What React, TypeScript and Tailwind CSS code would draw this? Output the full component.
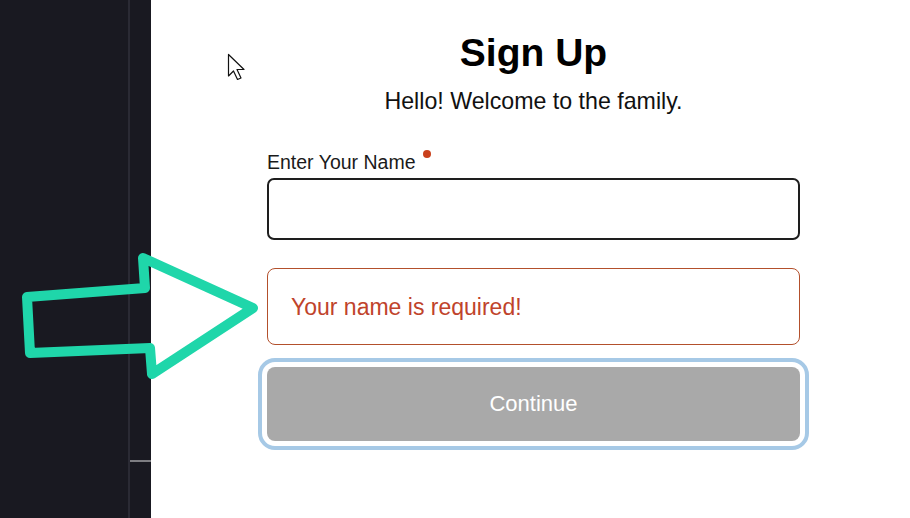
import React from "react";

export default function App() {
  return (
    <div className="relative flex h-[518px] w-[910px] overflow-hidden bg-white" style={{ fontFamily: '"Liberation Sans", Arial, sans-serif' }}>
      {/* left dark panel */}
      <div className="flex h-full w-[151px] shrink-0 bg-[#191921]">
        <div className="h-full w-[128px]" />
        <div className="h-full w-[2px] bg-[#2a2a34]" />
        <div className="flex h-full flex-1 flex-col">
          <div className="h-[460px]" />
          <div className="h-[2px] w-full bg-[#7d7d82]" />
        </div>
      </div>

      {/* right white panel */}
      <div className="flex flex-1 flex-col pl-[116px]">
        <div className="flex w-[533px] flex-col">
          <h1 className="mt-[33px] text-center text-[39px] font-bold leading-[39px] text-black">Sign Up</h1>
          <p className="mt-[16px] text-center text-[23.2px] leading-[26px] text-[#111]">Hello! Welcome to the family.</p>

          <label className="mt-[37px] flex items-start text-[19.5px] leading-[22px] text-[#1a1a1a]">
            Enter Your Name
            <span className="ml-[7px] mt-[-1px] inline-block h-[8px] w-[8px] rounded-full bg-[#c9401c]" />
          </label>
          <div className="mt-[5px] h-[62px] w-full rounded-[7px] border-2 border-[#1e1e1e] bg-white" />

          <div className="mt-[28px] flex h-[77px] w-full items-center rounded-[8px] border-[1.5px] border-[#b3502c] bg-white pl-[23px]">
            <span className="text-[23px] leading-[26px] text-[#c0432b]">Your name is required!</span>
          </div>

          <button className="mt-[22px] flex h-[74px] w-full items-center justify-center rounded-[8px] bg-[#a9a9a9] text-[22px] leading-[26px] text-white outline-4 outline-offset-[5px] outline-[#a6c9e6]" style={{ outlineStyle: "solid" }}>
            Continue
          </button>
        </div>
      </div>

      {/* annotation arrow overlay */}
      <svg className="pointer-events-none absolute left-0 top-0" width="910" height="518" viewBox="0 0 910 518">
        <polygon
          points="27,297 145,288 143,258 253,308 152,374 150,348 30,353"
          fill="none"
          stroke="#1fd6aa"
          strokeWidth="10"
          strokeLinejoin="round"
        />
        {/* mouse cursor */}
        <path
          d="M228.5,54.5 L228.5,76 L233.5,71 L237.5,79.5 L241,78 L237,69.5 L244,69.5 Z"
          fill="#fff"
          stroke="#111"
          strokeWidth="1.2"
          strokeLinejoin="round"
        />
      </svg>
    </div>
  );
}
